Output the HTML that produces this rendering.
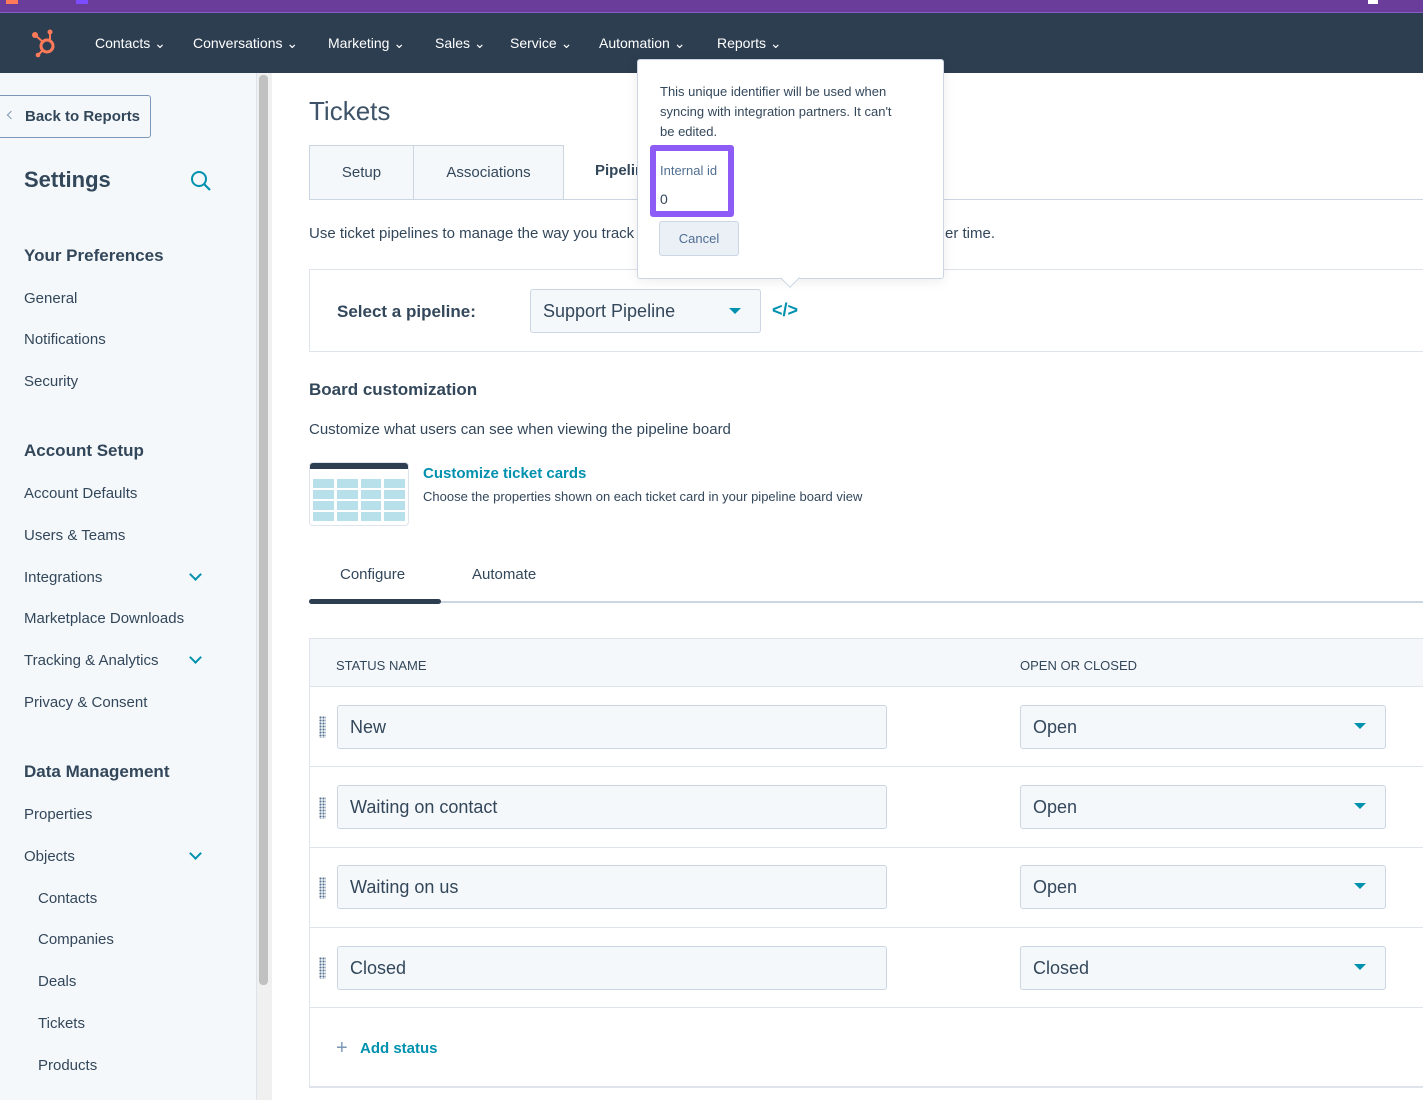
<!DOCTYPE html>
<html><head><meta charset="utf-8"><style>
*{box-sizing:border-box;margin:0;padding:0}
body{width:1423px;height:1100px;overflow:hidden;position:relative;font-family:"Liberation Sans",sans-serif;color:#33475b;background:#fff}
.a{position:absolute}
.nav span{position:absolute;top:34px;color:#fff;font-size:14px}
.side{left:0;top:73px;width:257px;height:1027px;background:#f5f8fa;border-right:1px solid #dfe3eb}
.sl{position:absolute;left:24px;font-size:15px;color:#33475b}
.sh{position:absolute;left:24px;font-size:17px;font-weight:bold;color:#33475b}
.chev{position:absolute;left:191px;width:9px;height:9px;border-right:2px solid #0091ae;border-bottom:2px solid #0091ae;transform:rotate(45deg)}
.inp{position:absolute;background:#f5f8fa;border:1px solid #cbd6e2;border-radius:3px;font-size:18px;padding-left:12px;line-height:42px;height:44px}
.tri{position:absolute;width:0;height:0;border-left:6px solid transparent;border-right:6px solid transparent;border-top:6px solid #0091ae}
.grip{position:absolute;left:319px;width:7px;height:22px;background-image:radial-gradient(circle,#516f90 1px,transparent 1.2px);background-size:3px 3px}
.hl{position:absolute;left:309px;width:1114px;height:1px;background:#dfe3eb}
</style></head><body>
<div class="a" style="left:0;top:0;width:1423px;height:13px;background:#6a3d9a;border-bottom:1px solid #8a5cc8"></div>
<div class="a" style="left:6px;top:0;width:12px;height:4px;background:#ff7a59"></div>
<div class="a" style="left:76px;top:0;width:12px;height:4px;background:#7c4dff"></div>
<div class="a" style="left:1368px;top:0;width:10px;height:4px;background:#fff"></div>
<div class="a nav" style="left:0;top:13px;width:1423px;height:60px;background:#2d3e50">
<svg class="a" style="left:30px;top:16px" width="32" height="30" viewBox="0 0 32 30"><circle cx="17" cy="17" r="6" fill="none" stroke="#ff7a59" stroke-width="3"/><circle cx="5" cy="6" r="3" fill="#ff7a59"/><line x1="5" y1="6" x2="13" y2="13" stroke="#ff7a59" stroke-width="2"/><circle cx="20" cy="3" r="2.5" fill="#ff7a59"/><line x1="20" y1="4" x2="20" y2="11" stroke="#ff7a59" stroke-width="2"/><line x1="13" y1="21" x2="8" y2="26" stroke="#ff7a59" stroke-width="2"/><circle cx="8" cy="26" r="2.3" fill="#ff7a59"/></svg>
<span style="left:95px;top:22px">Contacts ⌄</span><span style="left:193px;top:22px">Conversations ⌄</span><span style="left:328px;top:22px">Marketing ⌄</span><span style="left:435px;top:22px">Sales ⌄</span><span style="left:510px;top:22px">Service ⌄</span><span style="left:599px;top:22px">Automation ⌄</span><span style="left:717px;top:22px">Reports ⌄</span>
</div>
<div class="a side"></div>
<div class="a" style="left:257px;top:73px;width:15px;height:1027px;background:#f0f0f0"></div>
<div class="a" style="left:259px;top:75px;width:9px;height:910px;background:#c1c1c1;border-radius:4px"></div>
<div class="a" style="left:-4px;top:95px;width:155px;height:43px;border:1px solid #7c98b6;border-radius:3px;background:#f5f8fa;font-size:15px;font-weight:bold;line-height:41px;padding-left:28px">Back to Reports</div>
<div class="a" style="left:8px;top:112px;width:6px;height:6px;border-left:1.5px solid #7c98b6;border-bottom:1.5px solid #7c98b6;transform:rotate(45deg)"></div>
<div class="sh" style="top:167px;font-size:22px">Settings</div>
<svg class="a" style="left:190px;top:170px" width="22" height="22"><circle cx="9" cy="9" r="7" fill="none" stroke="#0091ae" stroke-width="2"/><line x1="14" y1="14" x2="20" y2="20" stroke="#0091ae" stroke-width="2.2"/></svg>
<div class="sh" style="top:246px">Your Preferences</div>
<div class="sl" style="top:290px">General</div><div class="sl" style="top:331px">Notifications</div><div class="sl" style="top:373px">Security</div>
<div class="sh" style="top:441px">Account Setup</div>
<div class="sl" style="top:485px">Account Defaults</div><div class="sl" style="top:527px">Users &amp; Teams</div><div class="sl" style="top:569px">Integrations</div><div class="chev" style="top:570px"></div>
<div class="sl" style="top:610px">Marketplace Downloads</div><div class="sl" style="top:652px">Tracking &amp; Analytics</div><div class="chev" style="top:653px"></div>
<div class="sl" style="top:694px">Privacy &amp; Consent</div>
<div class="sh" style="top:762px">Data Management</div>
<div class="sl" style="top:806px">Properties</div><div class="sl" style="top:848px">Objects</div><div class="chev" style="top:849px"></div>
<div class="sl" style="top:890px;left:38px">Contacts</div><div class="sl" style="top:931px;left:38px">Companies</div><div class="sl" style="top:973px;left:38px">Deals</div><div class="sl" style="top:1015px;left:38px">Tickets</div><div class="sl" style="top:1057px;left:38px">Products</div>

<div class="a" style="left:309px;top:96px;font-size:26px;font-weight:normal;color:#3e5368">Tickets</div>
<div class="a" style="left:309px;top:145px;width:105px;height:55px;background:#f5f8fa;border:1px solid #cbd6e2;text-align:center;line-height:53px;font-size:15px">Setup</div>
<div class="a" style="left:413px;top:145px;width:151px;height:55px;background:#f5f8fa;border:1px solid #cbd6e2;text-align:center;line-height:53px;font-size:15px">Associations</div>
<div class="a" style="left:595px;top:162px;font-size:15px;font-weight:bold">Pipelines</div>
<div class="a" style="left:564px;top:199px;width:859px;height:1px;background:#cbd6e2"></div>
<div class="a" style="left:309px;top:225px;font-size:15px">Use ticket pipelines to manage the way you track tickets through different stages over time.</div>
<div class="a" style="left:943px;top:225px;font-size:15px;background:#fff;padding-left:2px">er time.</div>
<div class="a" style="left:309px;top:269px;width:1120px;height:83px;border:1px solid #dfe3eb"></div>
<div class="a" style="left:337px;top:302px;font-size:17px;font-weight:bold">Select a pipeline:</div>
<div class="inp" style="left:530px;top:289px;width:231px;font-size:18px">Support Pipeline</div>
<div class="tri" style="left:729px;top:308px"></div>
<div class="a" style="left:772px;top:300px;font-size:18px;font-weight:bold;color:#0091ae">&lt;/&gt;</div>
<div class="a" style="left:309px;top:380px;font-size:17px;font-weight:bold">Board customization</div>
<div class="a" style="left:309px;top:421px;font-size:15px">Customize what users can see when viewing the pipeline board</div>
<div class="a" style="left:309px;top:462px;width:100px;height:64px;border:1px solid #dfe3eb;border-radius:4px;background:#fff;overflow:hidden">
<div style="height:6px;background:#2d3e50"></div>
<div style="display:flex;gap:3px;padding:10px 3px 0 3px">
<div style="flex:1;height:44px;background:repeating-linear-gradient(#b8e0ea 0 9px,#fff 9px 11px)"></div><div style="flex:1;height:44px;background:repeating-linear-gradient(#b8e0ea 0 9px,#fff 9px 11px)"></div><div style="flex:1;height:44px;background:repeating-linear-gradient(#b8e0ea 0 9px,#fff 9px 11px)"></div><div style="flex:1;height:44px;background:repeating-linear-gradient(#b8e0ea 0 9px,#fff 9px 11px)"></div></div></div>
<div class="a" style="left:423px;top:465px;font-size:15px;font-weight:bold;color:#0091ae">Customize ticket cards</div>
<div class="a" style="left:423px;top:489px;font-size:13px">Choose the properties shown on each ticket card in your pipeline board view</div>
<div class="a" style="left:340px;top:566px;font-size:15px">Configure</div>
<div class="a" style="left:472px;top:566px;font-size:15px">Automate</div>
<div class="a" style="left:309px;top:601px;width:1114px;height:2px;background:#cbd6e2"></div>
<div class="a" style="left:309px;top:599px;width:132px;height:5px;background:#2d3e50;border-radius:3px"></div>

<div class="a" style="left:309px;top:638px;width:1120px;height:450px;border:1px solid #dfe3eb;border-bottom:2px solid #dfe3eb"></div>
<div class="a" style="left:310px;top:639px;width:1113px;height:48px;background:#f5f8fa;border-bottom:1px solid #dfe3eb"></div>
<div class="a" style="left:336px;top:658px;font-size:13px">STATUS NAME</div>
<div class="a" style="left:1020px;top:658px;font-size:13px">OPEN OR CLOSED</div>
<div class="grip" style="top:716px"></div><div class="inp" style="left:337px;top:705px;width:550px">New</div><div class="inp" style="left:1020px;top:705px;width:366px">Open</div><div class="tri" style="left:1354px;top:723px"></div>
<div class="hl" style="top:766px"></div>
<div class="grip" style="top:797px"></div><div class="inp" style="left:337px;top:785px;width:550px">Waiting on contact</div><div class="inp" style="left:1020px;top:785px;width:366px">Open</div><div class="tri" style="left:1354px;top:803px"></div>
<div class="hl" style="top:847px"></div>
<div class="grip" style="top:877px"></div><div class="inp" style="left:337px;top:865px;width:550px">Waiting on us</div><div class="inp" style="left:1020px;top:865px;width:366px">Open</div><div class="tri" style="left:1354px;top:883px"></div>
<div class="hl" style="top:927px"></div>
<div class="grip" style="top:957px"></div><div class="inp" style="left:337px;top:946px;width:550px">Closed</div><div class="inp" style="left:1020px;top:946px;width:366px">Closed</div><div class="tri" style="left:1354px;top:964px"></div>
<div class="hl" style="top:1007px"></div>
<div class="a" style="left:336px;top:1037px;font-size:20px;color:#7c98b6">+</div>
<div class="a" style="left:360px;top:1040px;font-size:15px;font-weight:bold;color:#0091ae">Add status</div>

<div class="a" style="left:637px;top:59px;width:307px;height:220px;background:#fff;border:1px solid #cbd6e2;border-radius:3px;box-shadow:0 2px 12px rgba(0,0,0,.08)"></div>
<div class="a" style="left:783px;top:271px;width:14px;height:14px;background:#fff;border-right:1px solid #cbd6e2;border-bottom:1px solid #cbd6e2;transform:rotate(45deg)"></div>
<div class="a" style="left:660px;top:82px;width:245px;font-size:13px;line-height:20px">This unique identifier will be used when syncing with integration partners. It can't be edited.</div>
<div class="a" style="left:650px;top:145px;width:84px;height:72px;border:6px solid #8d5cf6;border-radius:3px;background:#fff"></div>
<div class="a" style="left:660px;top:163px;font-size:13px;color:#516f90">Internal id</div>
<div class="a" style="left:660px;top:191px;font-size:14px">0</div>
<div class="a" style="left:659px;top:221px;width:80px;height:35px;background:#eaf0f6;border:1px solid #cbd6e2;border-radius:3px;font-size:13px;text-align:center;line-height:33px;color:#506e91">Cancel</div>
</body></html>
